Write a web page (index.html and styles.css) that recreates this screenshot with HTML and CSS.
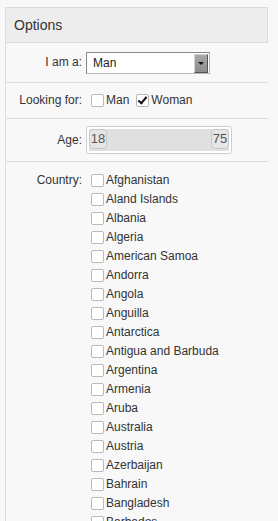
FILE: index.html
```html
<!DOCTYPE html>
<html lang="en">
<head>
    <meta charset="UTF-8">
    <meta name="viewport" content="width=device-width, initial-scale=1.0">
    <title>Options</title>
    <link rel="stylesheet" href="styles.css">
</head>
<body>
    <div class="painel">
        <div class="titulo">Options</div>

        <div class="linha linha-sexo">
            <label class="rotulo" for="sexo">I am a:</label>
            <div class="campo">
                <div class="caixa-select">
                    <select id="sexo" name="sexo">
                        <option>Man</option>
                        <option>Woman</option>
                    </select>
                    <span class="seta"></span>
                </div>
            </div>
        </div>

        <div class="linha linha-procura">
            <span class="rotulo">Looking for:</span>
            <div class="campo inline">
                <label class="opcao"><input type="checkbox"> Man</label>
                <label class="opcao"><input type="checkbox" checked> Woman</label>
            </div>
        </div>

        <div class="linha linha-idade">
            <span class="rotulo">Age:</span>
            <div class="campo">
                <div class="slider">
                    <div class="trilho">
                        <span class="puxador">18</span>
                        <span class="puxador">75</span>
                    </div>
                </div>
            </div>
        </div>

        <div class="linha linha-pais">
            <span class="rotulo">Country:</span>
            <div class="campo lista-paises" id="paises"></div>
        </div>
    </div>

    <script>
        const paises = ["Afghanistan", "Aland Islands", "Albania", "Algeria", "American Samoa",
            "Andorra", "Angola", "Anguilla", "Antarctica", "Antigua and Barbuda", "Argentina",
            "Armenia", "Aruba", "Australia", "Austria", "Azerbaijan", "Bahrain", "Bangladesh",
            "Barbados", "Belarus"];

        const lista = document.getElementById("paises");
        paises.forEach(nome => {
            const label = document.createElement("label");
            label.className = "opcao";
            const input = document.createElement("input");
            input.type = "checkbox";
            label.appendChild(input);
            label.appendChild(document.createTextNode(nome));
            lista.appendChild(label);
        });
    </script>
</body>
</html>
```

FILE: styles.css
```css
body {
    font-family: "Liberation Sans", Arial, sans-serif;
    font-size: 12px;
    color: #333;
    background-color: #f8f8f8;
    margin: 0;
    padding: 7px 10px 0 5px;
}

.painel {
    border-left: 1px solid #dcdcdc;
}

.titulo {
    height: 34px;
    line-height: 34px;
    padding-left: 8px;
    font-size: 14px;
    background-color: #ededed;
    border: 1px solid #dcdcdc;
    border-left: none;
}

.linha {
    display: flex;
    align-items: center;
    border-bottom: 1px solid #dcdcdc;
}

.linha-sexo {
    height: 39px;
}

.linha-procura {
    height: 35px;
}

.linha-idade {
    height: 42px;
}

.linha-pais {
    align-items: flex-start;
    padding-top: 9px;
    border-bottom: none;
}

.rotulo {
    width: 76px;
    text-align: right;
    padding-right: 4px;
    line-height: 19px;
}

.campo.inline {
    display: flex;
    gap: 2px;
}

.caixa-select {
    position: relative;
    width: 124px;
    height: 22px;
}

.caixa-select select {
    appearance: none;
    -webkit-appearance: none;
    width: 100%;
    height: 100%;
    margin: 0;
    padding: 0 0 0 6px;
    font-family: inherit;
    font-size: 12px;
    color: #222;
    background-color: #fff;
    border: 1px solid #8a8a8a;
    border-right-color: #b5b5b5;
    border-bottom-color: #b5b5b5;
    border-radius: 0;
}

.seta {
    position: absolute;
    top: 2px;
    right: 2px;
    width: 12px;
    height: 17px;
    background: linear-gradient(#a8a8a8, #8c8c8c);
    border: 1px solid;
    border-color: #d4d4d4 #555 #555 #d4d4d4;
    pointer-events: none;
}

.seta::after {
    content: "";
    position: absolute;
    left: 3px;
    top: 7px;
    border-left: 3px solid transparent;
    border-right: 3px solid transparent;
    border-top: 3px solid #111;
}

.opcao {
    display: flex;
    align-items: center;
    line-height: 19px;
    white-space: nowrap;
}

.opcao input {
    appearance: none;
    -webkit-appearance: none;
    width: 13px;
    height: 13px;
    margin: 0 2px 0 5px;
    background-color: #fff;
    border: 1px solid #b9b9b9;
    border-radius: 2px;
    position: relative;
}

.opcao input:checked::after {
    content: "";
    position: absolute;
    left: 3px;
    top: 0px;
    width: 3px;
    height: 7px;
    border: solid #111;
    border-width: 0 2px 2px 0;
    transform: rotate(40deg);
}

.slider {
    width: 140px;
    height: 22px;
    padding: 2px;
    background-color: #fff;
    border: 1px solid #cfcfcf;
    border-radius: 3px;
}

.trilho {
    display: flex;
    justify-content: space-between;
    height: 100%;
    background-color: #e0e0e0;
}

.puxador {
    width: 16px;
    height: 18px;
    line-height: 18px;
    font-size: 13px;
    color: #555;
    text-align: center;
    background-color: #e6e6e6;
    border: 1px solid #c8c8c8;
    border-radius: 4px;
}

.lista-paises {
    display: flex;
    flex-direction: column;
}
```
